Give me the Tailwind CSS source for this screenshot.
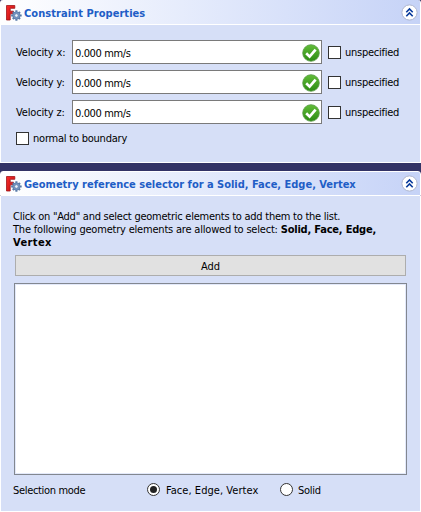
<!DOCTYPE html>
<html lang="en">
<head>
<meta charset="utf-8">
<title>Constraint Properties</title>
<script src="https://cdn.jsdelivr.net/npm/@tailwindcss/browser@4"></script>
</head>
<body class="w-[421px] h-[512px] overflow-hidden bg-[#333366] font-['DejaVu_Sans_Condensed','DejaVu_Sans',sans-serif] text-[11px] leading-[13px] tracking-[-0.25px] text-black whitespace-nowrap">
<svg class="absolute size-0">
  <defs>
    <linearGradient id="green" x1="0" y1="0" x2="0" y2="1"><stop offset="0" stop-color="#62bd38"/><stop offset="1" stop-color="#2b8a13"/></linearGradient>
    <linearGradient id="red" x1="0" y1="0" x2="1" y2="1"><stop offset="0" stop-color="#f82a2a"/><stop offset="1" stop-color="#c01010"/></linearGradient>
    <symbol id="logo" viewBox="0 0 16 16">
      <path d="M.5.5h8.3v2.8H4.2v2.9h3.3v2.6H4.2v6.2H.5z" fill="url(#red)" stroke="#a01518" stroke-width=".8"/>
      <g stroke="#5a7ba8" stroke-width="2.1"><path d="M10.4 5.2v10.6M5.1 10.5h10.6M6.8 6.9l7.2 7.2M14 6.9l-7.2 7.2"/></g>
      <circle cx="10.4" cy="10.5" r="3.7" fill="#7596c2" stroke="#4e6e9a" stroke-width=".5"/>
      <circle cx="10.4" cy="10.5" r="1.7" fill="#edf2fc" stroke="#4e6e9a" stroke-width=".5"/>
    </symbol>
    <symbol id="tick" viewBox="0 0 18 18">
      <circle cx="9" cy="9" r="8.3" fill="url(#green)" stroke="#5a9a48" stroke-width=".8"/>
      <path d="M4.2 9.3l3.4 3.3 6-7" fill="none" stroke="#fff" stroke-width="2.7"/>
    </symbol>
    <symbol id="fold" viewBox="0 0 17 17">
      <circle cx="8.5" cy="8.5" r="7.6" fill="#fff" stroke="#b0b7cf" stroke-width="1"/>
      <path d="M5.3 8.2l3.2-3.2 3.2 3.2M5.3 12.2L8.5 9l3.2 3.2" fill="none" stroke="#083a9b" stroke-width="1.6"/>
    </symbol>
  </defs>
</svg>

<section class="h-[163px] flex flex-col">
  <header class="h-[25px] shrink-0 flex items-center rounded-t-[3px] border border-t-0 border-white bg-linear-to-r from-white to-[#c6d3f7] pl-[5px] pr-[2px] pt-[1px]">
    <svg class="size-4"><use href="#logo"/></svg>
    <h1 class="ml-[2px] flex-1 pt-[2px] font-bold text-[#215dc6] tracking-[0.05px]">Constraint Properties</h1>
    <svg class="size-[17px]"><use href="#fold"/></svg>
  </header>
  <div class="flex-1 border-x border-b border-white bg-[#d6dff7] pl-[15px] pt-[15px]">
    <div class="flex flex-col gap-[6px]">
      <div class="flex h-6 items-center">
        <span class="w-[56px] tracking-[-0.15px]">Velocity x:</span>
        <div class="flex h-6 w-[250px] items-center justify-between border border-[#7a7a7a] bg-white pl-[2px] pr-[1px] pt-[2px]"><span class="tracking-[-0.38px]">0.000 mm/s</span><svg class="size-[18px]"><use href="#tick"/></svg></div>
        <span class="ml-[6px] size-[13px] border border-[#333] bg-white"></span><span class="ml-1">unspecified</span>
      </div>
      <div class="flex h-6 items-center">
        <span class="w-[56px] tracking-[-0.15px]">Velocity y:</span>
        <div class="flex h-6 w-[250px] items-center justify-between border border-[#7a7a7a] bg-white pl-[2px] pr-[1px] pt-[2px]"><span class="tracking-[-0.38px]">0.000 mm/s</span><svg class="size-[18px]"><use href="#tick"/></svg></div>
        <span class="ml-[6px] size-[13px] border border-[#333] bg-white"></span><span class="ml-1">unspecified</span>
      </div>
      <div class="flex h-6 items-center">
        <span class="w-[56px] tracking-[-0.15px]">Velocity z:</span>
        <div class="flex h-6 w-[250px] items-center justify-between border border-[#7a7a7a] bg-white pl-[2px] pr-[1px] pt-[2px]"><span class="tracking-[-0.38px]">0.000 mm/s</span><svg class="size-[18px]"><use href="#tick"/></svg></div>
        <span class="ml-[6px] size-[13px] border border-[#333] bg-white"></span><span class="ml-1">unspecified</span>
      </div>
    </div>
    <div class="mt-2 flex items-center"><span class="size-[13px] border border-[#333] bg-white"></span><span class="ml-1 tracking-[-0.22px]">normal to boundary</span></div>
  </div>
</section>

<section class="mt-2 h-[341px] flex flex-col">
  <header class="h-[25px] shrink-0 flex items-center rounded-t-[3px] border border-white bg-linear-to-r from-white to-[#c6d3f7] pl-[5px] pr-[2px]">
    <svg class="size-4"><use href="#logo"/></svg>
    <h1 class="ml-[2px] flex-1 pt-[2px] font-bold text-[#215dc6] tracking-[-0.01px]">Geometry reference selector for a Solid, Face, Edge, Vertex</h1>
    <svg class="size-[17px]"><use href="#fold"/></svg>
  </header>
  <div class="flex-1 border-x border-b border-white bg-[#d6dff7] pl-[12px] pt-[14px]">
    <p>Click on "Add" and select geometric elements to add them to the list.<br><span class="tracking-[-0.2px]">The following geometry elements are allowed to select: <b>Solid, Face, Edge,</b></span><br><b class="tracking-[0.4px]">Vertex</b></p>
    <div class="ml-[2px] mt-[6px] flex h-[21px] w-[391px] items-center justify-center border border-[#adadad] bg-[#e1e1e1] pt-px tracking-normal">Add</div>
    <div class="ml-[1px] mt-[7px] h-[192px] w-[393px] border border-[#828790] bg-white p-px"><div class="h-full outline outline-[#e3e9fa]"></div></div>
    <div class="mt-2 flex items-start">
      <span class="w-[134px] pt-px tracking-[-0.33px]">Selection mode</span>
      <span class="flex size-[13px] items-center justify-center rounded-full border border-[#333] bg-white"><span class="size-[7px] rounded-full bg-[#222]"></span></span>
      <span class="ml-[6px] w-[114px] pt-px tracking-[0.05px]">Face, Edge, Vertex</span>
      <span class="size-[13px] rounded-full border border-[#333] bg-white"></span><span class="ml-[5px] pt-px">Solid</span>
    </div>
  </div>
</section>
</body>
</html>
